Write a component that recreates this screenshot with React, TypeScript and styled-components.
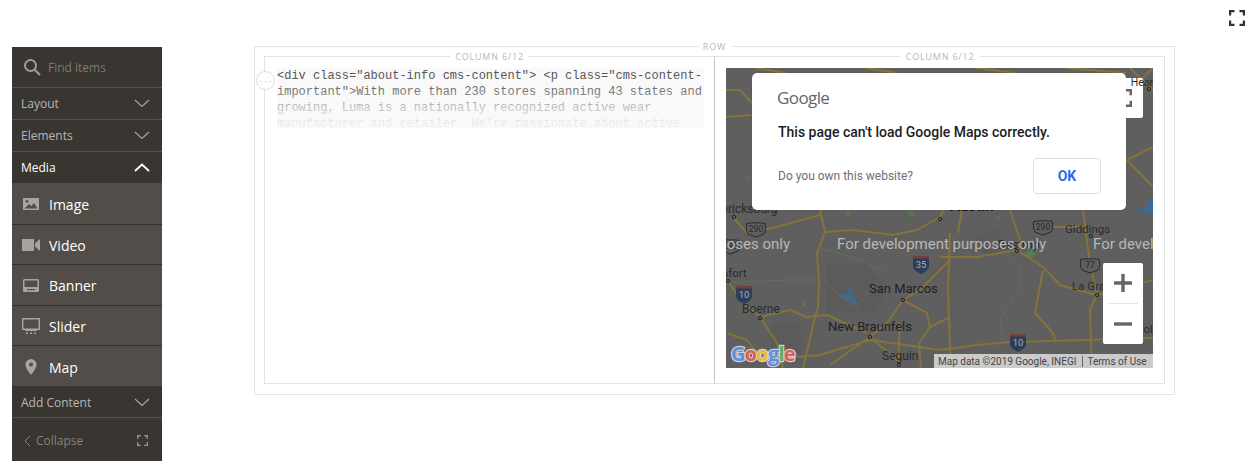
import React from 'react';
import styled, { createGlobalStyle } from 'styled-components';

const GlobalStyle = createGlobalStyle`
  html, body {
    margin: 0;
    padding: 0;
    background: #fff;
    font-family: "Open Sans", "Liberation Sans", sans-serif;
  }
`;

const Page = styled.div`
  width: 1257px;
  height: 472px;
  overflow: hidden;
`;

const TopBar = styled.div`
  display: flex;
  justify-content: flex-end;
  height: 46px;
  padding: 10px 12px 0 0;
  box-sizing: border-box;
`;

const Main = styled.div`
  display: flex;
  align-items: flex-start;
`;

const Sidebar = styled.aside`
  width: 150px;
  margin: 1px 0 0 12px;
  background: #393531;
  flex: none;
`;

const SearchRow = styled.div`
  display: flex;
  align-items: center;
  gap: 7px;
  height: 40px;
  padding-left: 11px;
  border-bottom: 1px solid #57524e;
  color: #7d7975;
  font-size: 12px;
`;

const SectionRow = styled.div<{ $open?: boolean; $tail?: boolean }>`
  display: flex;
  align-items: center;
  justify-content: space-between;
  box-sizing: border-box;
  height: ${(p) => (p.$open ? 31 : 32)}px;
  padding: ${(p) => (p.$tail ? '2px' : '0')} 12px 0 9px;
  border-bottom: ${(p) => (p.$open ? 'none' : '1px solid #57524e')};
  color: ${(p) => (p.$open ? '#fff' : '#b9b6b3')};
  font-size: 12px;
  font-weight: ${(p) => (p.$open ? 500 : 400)};
`;

const ItemList = styled.div`
  padding-top: 1px;
  background: #524d49;
`;

const Item = styled.div<{ $last?: boolean }>`
  display: flex;
  align-items: center;
  box-sizing: border-box;
  height: ${(p) => (p.$last ? 39.6 : 40.6)}px;
  padding-top: 2px;
  border-bottom: ${(p) => (p.$last ? 'none' : '1px solid #34302d')};
  color: #fff;
  font-size: 14px;
`;

const ItemIcon = styled.span`
  display: flex;
  justify-content: center;
  width: 37px;
  margin-top: -1px;
`;

const CollapseRow = styled.div`
  display: flex;
  align-items: center;
  justify-content: space-between;
  box-sizing: border-box;
  height: 42.6px;
  padding: 3px 14px 0 12px;
  color: #85817d;
  font-size: 12px;
`;

const CollapseLabel = styled.span`
  display: flex;
  align-items: center;
  gap: 5px;
`;

const RowFrame = styled.section`
  position: relative;
  box-sizing: border-box;
  width: 921px;
  height: 349px;
  margin-left: 92px;
  padding: 9px 9px 10px;
  border: 1px solid #e3e3e3;
`;

const FrameLabel = styled.span`
  position: absolute;
  top: -6px;
  left: 50%;
  transform: translateX(-50%);
  padding: 0 5px;
  background: #fff;
  color: #b8b8b8;
  font-size: 9px;
  line-height: 11px;
  letter-spacing: 0.8px;
  white-space: nowrap;
`;

const Columns = styled.div`
  display: flex;
  height: 100%;
`;

const Column = styled.div<{ $first?: boolean }>`
  position: relative;
  box-sizing: border-box;
  width: ${(p) => (p.$first ? 451 : 450)}px;
  height: 100%;
  padding: 11px ${(p) => (p.$first ? 10 : 11)}px 0 ${(p) => (p.$first ? 12 : 10)}px;
  border: 1px solid #e3e3e3;
  border-left-color: ${(p) => (p.$first ? '#e3e3e3' : 'transparent')};
  border-right-color: ${(p) => (p.$first ? '#c4c4c4' : '#e3e3e3')};
`;

const Handle = styled.span`
  position: absolute;
  top: 14px;
  left: -9px;
  width: 17px;
  height: 17px;
  border: 1px solid #dcdcdc;
  border-radius: 50%;
  background: #fff;
  color: #c4c4c4;
  font-size: 8px;
  line-height: 15px;
  text-align: center;
  white-space: nowrap;
`;

const CodeBlock = styled.div`
  position: relative;
  height: 60px;
  overflow: hidden;
  background: #f9f9f9;
  color: #555;
  font-family: "Liberation Mono", monospace;
  font-size: 12px;
  line-height: 16px;

  &::after {
    content: '';
    position: absolute;
    inset: 0;
    background: linear-gradient(
      180deg,
      rgba(249, 249, 249, 0) 13%,
      rgba(249, 249, 249, 0.2) 38%,
      rgba(249, 249, 249, 0.65) 65%,
      rgba(249, 249, 249, 0.93) 93%
    );
  }
`;

const MapBox = styled.div`
  position: relative;
  width: 427px;
  height: 300px;
  overflow: hidden;
  background: #5f5f5f;
  font-family: Roboto, "Liberation Sans", sans-serif;
`;

const MapDrawing = styled.svg`
  display: block;
`;

const RoadLayer = styled.g`
  filter: blur(0.35px);
`;

const FullscreenControl = styled.div`
  position: absolute;
  top: 10px;
  right: 10px;
  display: flex;
  align-items: center;
  justify-content: center;
  width: 40px;
  height: 40px;
  border-radius: 2px;
  background: #fff;
`;

const OverControlLabel = styled.span`
  position: absolute;
  top: 8px;
  right: 0;
  color: #2b2b2b;
  font-size: 10.5px;
  line-height: 14px;
`;

const ZoomControl = styled.div`
  position: absolute;
  top: 195px;
  right: 10px;
  display: flex;
  flex-direction: column;
  width: 40px;
  height: 81px;
  border-radius: 2px;
  background: #fff;
`;

const ZoomButton = styled.div`
  display: flex;
  flex: 1;
  align-items: center;
  justify-content: center;
`;

const ZoomDivider = styled.div`
  height: 1px;
  margin: 0 5px;
  background: #e6e6e6;
`;

const Attribution = styled.div`
  position: absolute;
  right: 0;
  bottom: 0;
  display: flex;
  align-items: center;
  box-sizing: border-box;
  width: 219px;
  height: 14px;
  padding-left: 4px;
  background: #cbcbcb;
  color: #444;
  font-size: 10px;
  white-space: nowrap;
`;

const AttributionLink = styled.span`
  margin-left: 6px;
  padding-left: 4px;
  border-left: 1px solid #666;
`;

const Dialog = styled.div`
  position: absolute;
  top: 5px;
  left: 26px;
  box-sizing: border-box;
  width: 374px;
  height: 137px;
  padding: 14px 26px 0;
  border-radius: 5px;
  background: #fff;
  box-shadow: 0 0 1px rgba(0, 0, 0, 0.4);
`;

const DialogLogo = styled.div`
  color: #62666a;
  font-family: "Open Sans", sans-serif;
  font-size: 17px;
  line-height: 22px;
  letter-spacing: -0.6px;
  margin-left: -1px;
`;

const DialogTitle = styled.div`
  margin-top: 13px;
  color: #1a1d22;
  font-size: 14px;
  font-weight: 500;
  line-height: 20px;
`;

const DialogFooter = styled.div`
  display: flex;
  align-items: center;
  justify-content: space-between;
  margin: 16px -1px 0 0;
  color: #6d7075;
  font-size: 12px;
`;

const OkButton = styled.div`
  display: flex;
  align-items: center;
  justify-content: center;
  box-sizing: border-box;
  width: 68px;
  height: 36px;
  border: 1px solid #dcdfe3;
  border-radius: 4px;
  color: #2a6ae8;
  font-size: 14px;
  font-weight: 700;
`;

const Chevron = ({ up }: { up?: boolean }) => (
  <svg width="16" height="9" viewBox="0 0 16 9">
    <path
      d={up ? 'M1 8 8 1.5 15 8' : 'M1 1 8 7.5 15 1'}
      fill="none"
      stroke={up ? '#fff' : '#a9a6a3'}
      strokeWidth={up ? 1.8 : 1.1}
    />
  </svg>
);

const CornersIcon = ({ size, color, weight }: { size: number; color: string; weight: number }) => (
  <svg width={size} height={size} viewBox="0 0 16 16">
    <path
      d="M1 5.5V1h4.5M10.5 1H15v4.5M15 10.5V15h-4.5M5.5 15H1v-4.5"
      fill="none"
      stroke={color}
      strokeWidth={weight}
    />
  </svg>
);

const ICON_GREY = '#a8a5a1';

const mediaItems: { label: string; icon: React.ReactNode }[] = [
  {
    label: 'Image',
    icon: (
      <svg width="16" height="12" viewBox="0 0 16 12">
        <path d="M0 0h16v12H0z" fill={ICON_GREY} />
        <path d="M1.5 10.5 6 6l2.5 2L11 5l3.5 5.5z" fill="#524d49" />
        <circle cx="4" cy="3.4" r="1.4" fill="#524d49" />
      </svg>
    ),
  },
  {
    label: 'Video',
    icon: (
      <svg width="18" height="12" viewBox="0 0 18 12">
        <path d="M0 0h12v12H0zM13 4.5 18 0v12l-5-4.5z" fill={ICON_GREY} />
      </svg>
    ),
  },
  {
    label: 'Banner',
    icon: (
      <svg width="16" height="13" viewBox="0 0 16 13">
        <path d="M0 1.5A1.5 1.5 0 0 1 1.5 0h13A1.5 1.5 0 0 1 16 1.5v10a1.5 1.5 0 0 1-1.5 1.5h-13A1.5 1.5 0 0 1 0 11.5z" fill={ICON_GREY} />
        <path d="M1.5 1.5h13V8h-13zM4 10h8v1.2H4z" fill="#524d49" />
      </svg>
    ),
  },
  {
    label: 'Slider',
    icon: (
      <svg width="18" height="16" viewBox="0 0 18 16">
        <path d="M.7.7h16.600v10.600H.7z" fill="none" stroke={ICON_GREY} strokeWidth="1.4" />
        <path d="M3 12h12v1H3z" fill={ICON_GREY} />
        <path d="M4 14.500h2V16H4zM8 14.500h2V16H8zM12 14.500h2V16h-2z" fill={ICON_GREY} />
      </svg>
    ),
  },
  {
    label: 'Map',
    icon: (
      <svg width="12" height="16" viewBox="0 0 12 16">
        <path fillRule="evenodd" d="M6 0a5.600 5.600 0 0 1 5.600 5.600C11.600 9.500 6 16 6 16S.4 9.500.4 5.600A5.600 5.600 0 0 1 6 0zm0 3.600a2 2 0 1 0 0 4 2 2 0 0 0 0-4z" fill={ICON_GREY} />
      </svg>
    ),
  },
];

const roads = [
  'M94 142 99 164 91 185 93 215 92 239 89 249 82 279 77 300',
  'M7 149 21 165 47 160 94 147',
  'M99 164 127 162 167 167 191 162 214 149 224 130',
  'M0 22 14 22 26 35',
  'M0 49 26 47',
  'M224 192 194 222 177 232 161 255 144 269 104 297',
  'M1 212 17 235 34 249 51 275 57 300',
  'M34 249 64 242 81 249 101 247 141 265',
  'M1 265 21 272 37 292',
  'M71 289 94 287 144 272',
  'M144 269 174 295',
  'M177 232 201 245 204 259 224 249',
  'M174 255 172 295',
  'M204 259 193 275 195 300',
  'M214 282 251 277 284 274 427 270',
  'M144 272 214 282',
  'M291 182 317 199 334 217 371 227 427 212',
  'M317 202 309 245 327 265 329 272',
  'M357 142 364 195 371 227 364 242 366 300',
  'M224 165 222 219 224 282 226 300',
  'M214 189 251 189 291 182',
  'M327 159 357 159',
  'M284 142 294 172 291 182',
  'M236 142 232 165',
  'M401 92 427 79',
  'M401 92 427 119',
  'M404 0 427 22',
  'M427 0 404 22',
  'M30 0 60 5',
  'M140 0 170 5',
  'M250 0 290 5',
  'M340 0 400 5',
];

const minorRoads = [
  'M284 189 294 199 294 219 274 252 277 275',
  'M93 180 130 190 160 205',
  'M100 215 130 240 150 215',
  'M0 215 60 212 92 212',
];

const labels: { x: number; y: number; text: string; size?: number; weight?: number; fill?: string }[] = [
  { x: -28, y: 145, text: 'Fredericksburg', size: 12, fill: '#2b2b2b' },
  { x: 224, y: 143, text: 'Austin', size: 15, weight: 700, fill: '#111' },
  { x: -22, y: 209, text: 'Comfort', size: 11.5, fill: '#2b2b2b' },
  { x: 16, y: 245, text: 'Boerne', size: 12, fill: '#2b2b2b' },
  { x: 143, y: 225, text: 'San Marcos', size: 13, fill: '#1f1f1f' },
  { x: 102, y: 263, text: 'New Braunfels', size: 13, fill: '#1f1f1f' },
  { x: 156, y: 292, text: 'Seguin', size: 12, fill: '#2b2b2b' },
  { x: 339, y: 165, text: 'Giddings', size: 11.5, fill: '#2b2b2b' },
  { x: 272, y: 181, text: 'Bastrop', size: 12, fill: '#2b2b2b' },
  { x: 346, y: 222, text: 'La Grange', size: 11.5, fill: '#2b2b2b' },
  { x: 410, y: 265, text: 'Columbus', size: 11.5, fill: '#2b2b2b' },
];

const watermarks = [-145, 111, 367];

const cities: [number, number][] = [
  [8, 149], [2, 213], [34, 250], [177, 232], [144, 269], [173, 297], [214, 151],
  [291, 183], [365, 168], [371, 227], [423, 21],
];

const shields: { x: number; y: number; text: string; interstate?: boolean }[] = [
  { x: 30, y: 161, text: '290' },
  { x: 4, y: 178, text: '290' },
  { x: 18, y: 227, text: '10', interstate: true },
  { x: 195, y: 197, text: '35', interstate: true },
  { x: 317, y: 159, text: '290' },
  { x: 364, y: 197, text: '77' },
  { x: 292, y: 275, text: '10', interstate: true },
];

const logoLetters: [string, string][] = [
  ['G', '#5a8fe8'],
  ['o', '#e25b4f'],
  ['o', '#eebb2d'],
  ['g', '#5a8fe8'],
  ['l', '#5fae62'],
  ['e', '#e25b4f'],
];

const MapArt = () => (
  <MapDrawing width="427" height="300" viewBox="0 0 427 300">
    <g fill="#5b5b5b">
      <path d="M100 195h40l20 25-10 25h-50zM250 170l20-10 10 20-20 10z" />
      <path d="M45 255h30v40H45z" />
    </g>
    <path d="M18 110l7-2-2 5zM119 143h6v5h-6zM181 143l6-3 2 8-6 1zM270 149l6-1-3 5z" fill="#55744a" />
    <path d="M298 186l8-6 7 2-6 8-6 0z" fill="#5a7a50" />
    <path d="M74 240l5-7 1 5z" fill="#5a7a50" />
    <path d="M112 228l8-3 3-5 4 2-3 5 6 4 1 5-4-1-5-3-6-1z" fill="#3d6a91" />
    <path d="M411 142l8-3 3-6 5-1v14l-8-1z" fill="#3d6a91" />
    <RoadLayer>
      <g fill="none" stroke="#85733a" strokeWidth="2" strokeLinejoin="round">
        {roads.map((d) => (
          <path key={d} d={d} />
        ))}
      </g>
      <g fill="none" stroke="#6e6a58" strokeWidth="1">
        {minorRoads.map((d) => (
          <path key={d} d={d} />
        ))}
      </g>
    </RoadLayer>
    {cities.map(([x, y]) => (
      <circle key={`${x}-${y}`} cx={x} cy={y} r="1.7" fill="#5f5f5f" stroke="#1f1f1f" strokeWidth="0.9" />
    ))}
    {shields.map((s) =>
      s.interstate ? (
        <g key={`${s.x}-${s.y}`}>
          <path
            d={`M${s.x - 8} ${s.y - 9}h16v9c0 5-4 7-8 9-4-2-8-4-8-9z`}
            fill="#2c3d5a"
          />
          <path d={`M${s.x - 8} ${s.y - 9}h16v2.500h-16z`} fill="#74413a" />
          <text x={s.x} y={s.y + 3} textAnchor="middle" fontSize="9.500" fill="#a9b0bb">
            {s.text}
          </text>
        </g>
      ) : (
        <g key={`${s.x}-${s.y}`}>
          <path
            d={`M${s.x - 9} ${s.y - 6}c3 1 6-1 9 0 3-1 6 1 9 0 1 4 1 8-1 11l-8 3-8-3c-2-3-2-7-1-11z`}
            fill="#5f5f5f"
            stroke="#2a2a2a"
          />
          <text x={s.x} y={s.y + 3} textAnchor="middle" fontSize="8.500" fill="#2a2a2a">
            {s.text}
          </text>
        </g>
      ),
    )}
    {labels.map((l) => (
      <text key={l.text} x={l.x} y={l.y} fontSize={l.size} fontWeight={l.weight} fill={l.fill}>
        {l.text}
      </text>
    ))}
    {watermarks.map((x) => (
      <text key={x} x={x} y="181" fontSize="15" fill="#b8b8b8">
        For development purposes only
      </text>
    ))}
    <text
      x="5"
      y="293"
      fontFamily="'Open Sans', sans-serif"
      fontSize="20"
      fontWeight="700"
      letterSpacing="-0.8"
      stroke="#cfcfcf"
      strokeWidth="2.4"
      paintOrder="stroke"
    >
      {logoLetters.map(([letter, color], i) => (
        <tspan key={i} fill={color}>
          {letter}
        </tspan>
      ))}
    </text>
  </MapDrawing>
);

export default function App() {
  return (
    <Page>
      <GlobalStyle />
      <TopBar>
        <CornersIcon size={16} color="#33302d" weight={2.4} />
      </TopBar>
      <Main>
        <Sidebar>
          <SearchRow>
            <svg width="18" height="18" viewBox="0 0 18 18">
              <circle cx="7.500" cy="7.500" r="5.500" fill="none" stroke="#a09c98" strokeWidth="2" />
              <path d="M11.500 11.500 17 17" stroke="#a09c98" strokeWidth="2.200" />
            </svg>
            Find items
          </SearchRow>
          <SectionRow>
            Layout
            <Chevron />
          </SectionRow>
          <SectionRow>
            Elements
            <Chevron />
          </SectionRow>
          <SectionRow $open>
            Media
            <Chevron up />
          </SectionRow>
          <ItemList>
            {mediaItems.map((item, i) => (
              <Item key={item.label} $last={i === mediaItems.length - 1}>
                <ItemIcon>{item.icon}</ItemIcon>
                {item.label}
              </Item>
            ))}
          </ItemList>
          <SectionRow $tail>
            Add Content
            <Chevron />
          </SectionRow>
          <CollapseRow>
            <CollapseLabel>
              <svg width="7" height="12" viewBox="0 0 7 12">
                <path d="M6 1 1 6l5 5" fill="none" stroke="#85817d" />
              </svg>
              Collapse
            </CollapseLabel>
            <CornersIcon size={11} color="#9a9692" weight={2} />
          </CollapseRow>
        </Sidebar>
        <RowFrame>
          <FrameLabel>ROW</FrameLabel>
          <Columns>
            <Column $first>
              <FrameLabel>COLUMN 6/12</FrameLabel>
              <Handle>- - -</Handle>
              <CodeBlock>
                {'<div class="about-info cms-content"> <p class="cms-content-important">With more than 230 stores spanning 43 states and growing, Luma is a nationally recognized active wear manufacturer and retailer. We\'re passionate about active lifestyles and it goes way beyond apparel.'}
              </CodeBlock>
            </Column>
            <Column>
              <FrameLabel>COLUMN 6/12</FrameLabel>
              <MapBox>
                <MapArt />
                <FullscreenControl>
                  <CornersIcon size={18} color="#666" weight={2.400} />
                </FullscreenControl>
                <OverControlLabel>Hear</OverControlLabel>
                <ZoomControl>
                  <ZoomButton>
                    <svg width="18" height="18" viewBox="0 0 18 18">
                      <path d="M0 7.300h18v3.400H0zM7.300 0h3.400v18H7.300z" fill="#666" />
                    </svg>
                  </ZoomButton>
                  <ZoomDivider />
                  <ZoomButton>
                    <svg width="18" height="4" viewBox="0 0 18 4">
                      <path d="M0 .3h18v3.400H0z" fill="#666" />
                    </svg>
                  </ZoomButton>
                </ZoomControl>
                <Attribution>
                  Map data ©2019 Google, INEGI
                  <AttributionLink>Terms of Use</AttributionLink>
                </Attribution>
                <Dialog>
                  <DialogLogo>Google</DialogLogo>
                  <DialogTitle>This page can't load Google Maps correctly.</DialogTitle>
                  <DialogFooter>
                    Do you own this website?
                    <OkButton>OK</OkButton>
                  </DialogFooter>
                </Dialog>
              </MapBox>
            </Column>
          </Columns>
        </RowFrame>
      </Main>
    </Page>
  );
}
